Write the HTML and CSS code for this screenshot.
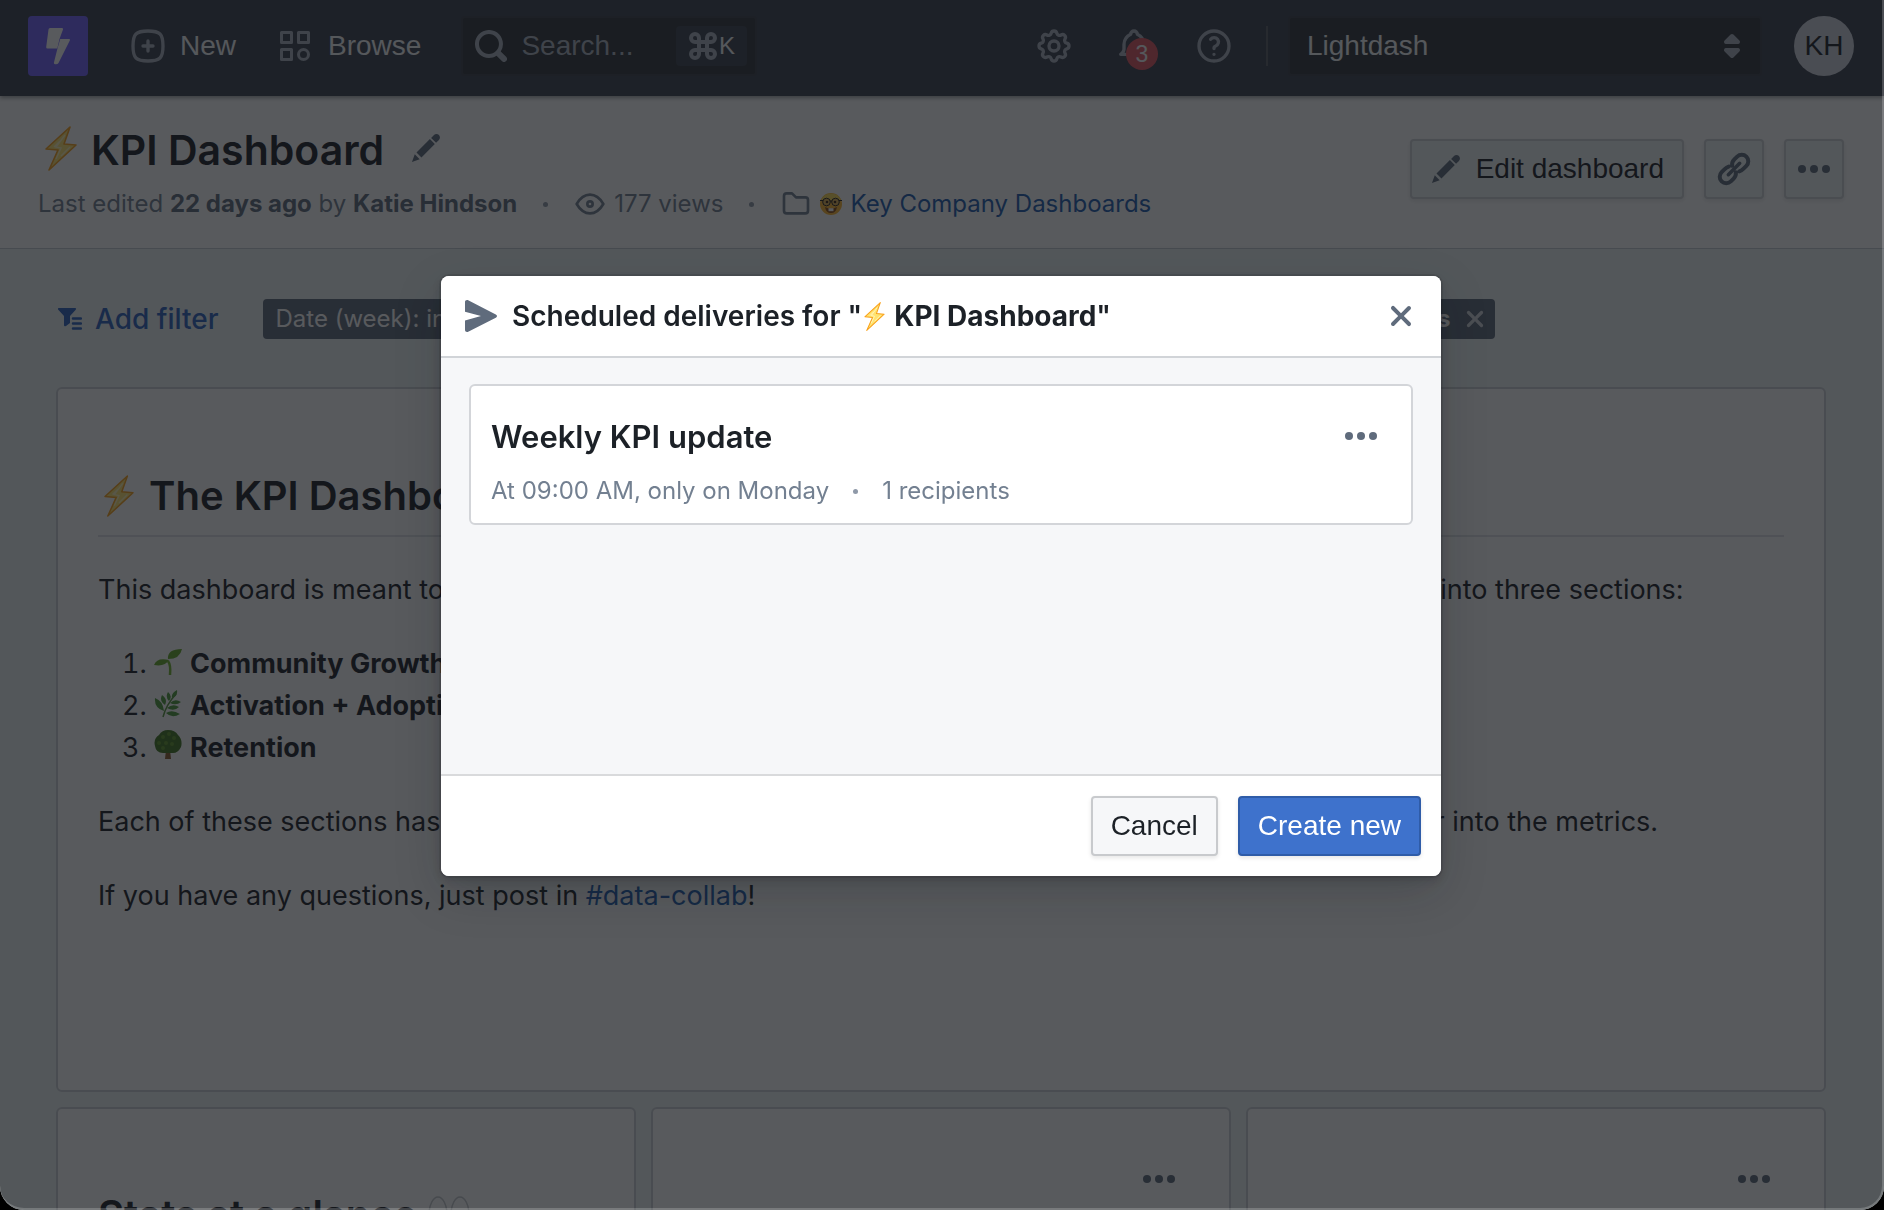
FILE: index.html
```html
<!DOCTYPE html>
<html lang="en">
<head>
<meta charset="utf-8">
<meta name="viewport" content="width=device-width, initial-scale=1">
<title>KPI Dashboard - Lightdash</title>
<link rel="stylesheet" href="styles.css">
</head>
<body>
<svg class="sprite" aria-hidden="true">
  <symbol id="bolt" viewBox="-1 -1 32 45"><path d="M24 0 18 17 30 18 3 43 12 23 0 22Z" fill="#ffe36e" stroke="#f9a11b" stroke-width="1.600" stroke-linejoin="round"/><path d="M19 8 10 20 15 21 10 32M14 14 8 20M24 20 15 29" fill="none" stroke="#fff3b8" stroke-width="1.500"/></symbol>
  <symbol id="edit" viewBox="0 0 16 16"><path fill="currentColor" d="M3.25 10.26l2.47 2.47 6.69-6.69-2.46-2.48-6.7 6.7zM.99 14.99l3.86-1.39-2.46-2.44L.99 15zm12.25-14c-.48 0-.92.2-1.24.51l-1.44 1.44 2.47 2.47 1.44-1.44c.32-.32.51-.75.51-1.24.01-.95-.77-1.74-1.74-1.74z"/></symbol>
  <symbol id="more" viewBox="0 0 16 16"><g fill="currentColor"><circle cx="2" cy="8" r="2"/><circle cx="8" cy="8" r="2"/><circle cx="14" cy="8" r="2"/></g></symbol>
  <symbol id="cross" viewBox="0 0 16 16"><path fill="currentColor" d="M9.41 8l3.29-3.29c.19-.18.3-.43.3-.71a1.003 1.003 0 00-1.71-.71L8 6.59l-3.29-3.3a1.003 1.003 0 00-1.42 1.42L6.59 8 3.3 11.29c-.19.18-.3.43-.3.71a1.003 1.003 0 001.71.71L8 9.41l3.29 3.3a1.003 1.003 0 001.42-1.42L9.41 8z"/></symbol>
</svg>

<div class="app">
  <header class="navbar">
    <a class="logo" href="#" aria-label="Home">
      <svg width="24" height="38" viewBox="0 0 24 38" fill="#fff"><path d="M4 1h12q1.500 0 1 1.500L13.500 12 11.300 21.500H1.500Q0 21.500.2 20L2.500 2.500Q2.700 1 4 1Z"/><path d="M14.200 12H23q1.500 0 .8 1.500L12.500 36q-1 1.500-3 1.300-2-.2-1.500-2L11.200 22.500Z"/></svg>
    </a>
    <button class="nav-button nav-new" type="button">
      <svg class="line-icon" width="40" height="40" viewBox="0 0 24 24"><path d="M9 12h6M12 9v6M12 3c7.200 0 9 1.800 9 9s-1.800 9-9 9-9-1.800-9-9 1.800-9 9-9z"/></svg>
      New
    </button>
    <button class="nav-button nav-browse" type="button">
      <svg width="30" height="30" viewBox="0 0 30 30" fill="none" stroke="currentColor" stroke-width="3" stroke-linejoin="round"><path d="M1.500 1.500h10v10h-10zM18.500 1.500h10v10h-10zM1.500 18.500h10v10h-10z"/><circle cx="23.500" cy="23.500" r="5"/></svg>
      Browse
    </button>
    <label class="search">
      <svg width="32" height="32" viewBox="0 0 16 16" fill="currentColor"><path d="M15.550 13.430l-2.670-2.680a6.940 6.940 0 001.110-3.760c0-3.870-3.130-7-7-7s-7 3.130-7 7 3.130 7 7 7c1.390 0 2.680-.42 3.760-1.110l2.680 2.670a1.498 1.498 0 102.120-2.120zm-8.560-1.440c-2.760 0-5-2.240-5-5s2.240-5 5-5 5 2.240 5 5-2.240 5-5 5z"/></svg>
      <input type="search" placeholder="Search..." aria-label="Search">
      <span class="shortcut"><svg width="28" height="28" viewBox="0 0 28 28" fill="none" stroke="currentColor" stroke-width="4"><path d="M10 10H6a4 4 0 1 1 4-4v16a4 4 0 1 1-4-4h16a4 4 0 1 1-4 4V6a4 4 0 1 1 4 4H10"/></svg><kbd>K</kbd></span>
    </label>
    <div class="nav-right">
      <button class="icon-button" type="button" aria-label="Settings"><svg class="line-icon" width="40" height="40" viewBox="0 0 24 24"><path d="M10.325 4.317c.426-1.756 2.924-1.756 3.350 0a1.724 1.724 0 0 0 2.573 1.066c1.543-.94 3.310.826 2.370 2.370a1.724 1.724 0 0 0 1.065 2.572c1.756.426 1.756 2.924 0 3.350a1.724 1.724 0 0 0-1.066 2.573c.94 1.543-.826 3.310-2.370 2.370a1.724 1.724 0 0 0-2.572 1.065c-.426 1.756-2.924 1.756-3.350 0a1.724 1.724 0 0 0-2.573-1.066c-1.543.94-3.310-.826-2.370-2.370a1.724 1.724 0 0 0-1.065-2.572c-1.756-.426-1.756-2.924 0-3.350a1.724 1.724 0 0 0 1.066-2.573c-.94-1.543.826-3.310 2.370-2.370 1 .608 2.296.07 2.572-1.065z"/><circle cx="12" cy="12" r="3"/></svg></button>
      <button class="icon-button" type="button" aria-label="Notifications"><svg class="line-icon" width="40" height="40" viewBox="0 0 24 24"><path d="M10 5a2 2 0 0 1 4 0a7 7 0 0 1 4 6v3a4 4 0 0 0 2 3h-16a4 4 0 0 0 2-3v-3a7 7 0 0 1 4-6"/></svg><span class="badge">3</span></button>
      <button class="icon-button" type="button" aria-label="Help"><svg class="line-icon" width="40" height="40" viewBox="0 0 24 24"><circle cx="12" cy="12" r="9"/><path d="M12 17v.01M12 13.500a1.500 1.500 0 0 1 1-1.500a2.600 2.600 0 1 0-3-4"/></svg></button>
      <span class="nav-divider"></span>
      <div class="project">
        <select aria-label="Project"><option>Lightdash</option></select>
        <svg width="32" height="32" viewBox="0 0 16 16" fill="currentColor"><path d="M5 7h6a1.003 1.003 0 00.71-1.710l-3-3C8.530 2.110 8.280 2 8 2s-.53.11-.71.29l-3 3A1.003 1.003 0 005 7zm6 2H5a1.003 1.003 0 00-.71 1.710l3 3c.18.18.43.29.71.29s.53-.11.71-.29l3-3A1.003 1.003 0 0011 9z"/></svg>
      </div>
      <button class="avatar" type="button">KH</button>
    </div>
  </header>

  <section class="page-header">
    <div class="page-info">
      <div class="title-row">
        <svg class="bolt-large" width="32" height="45"><use href="#bolt"/></svg>
        <h1>KPI Dashboard</h1>
        <button class="icon-button rename" type="button" aria-label="Rename"><svg width="32" height="32"><use href="#edit"/></svg></button>
      </div>
      <div class="meta">
        <span>Last edited <b>22 days ago</b> by <b>Katie Hindson</b></span>
        <i class="dot"></i>
        <span class="meta-item"><svg class="line-icon" width="32" height="32" viewBox="0 0 24 24"><circle cx="12" cy="12" r="2"/><path d="M22 12c-2.600 4.500-6 7-10 7s-7.400-2.500-10-7c2.600-4.500 6-7 10-7s7.400 2.500 10 7"/></svg>177 views</span>
        <i class="dot"></i>
        <span class="meta-item"><svg class="line-icon" width="32" height="32" viewBox="0 0 24 24"><path d="M5 4h4l3 3h7a2 2 0 0 1 2 2v8a2 2 0 0 1-2 2h-14a2 2 0 0 1-2-2v-11a2 2 0 0 1 2-2"/></svg>
          <svg width="22" height="22" viewBox="0 0 22 22"><circle cx="11" cy="11" r="11" fill="#ffb52e"/><path d="M1 7a11 11 0 0 1 20 0z" fill="#ffdc55"/><path d="M5 14q6 3 12 0-1 6-6 6t-6-6z" fill="#8a4a12"/><path d="M8.500 15.200h5v3h-5z" fill="#fff"/><g fill="#e0b050" stroke="#2b2620" stroke-width="1"><circle cx="6.500" cy="9" r="3.800"/><circle cx="15.500" cy="9" r="3.800"/></g><path d="M0 7.500h3M10 8h2M19 7.500h3" stroke="#2b2620" stroke-width="1.200"/><circle cx="7" cy="9" r="1.300" fill="#3c2410"/><circle cx="15" cy="9" r="1.300" fill="#3c2410"/></svg>
          <a href="#">Key Company Dashboards</a></span>
      </div>
    </div>
    <div class="page-actions">
      <button class="button" type="button"><svg width="32" height="32"><use href="#edit"/></svg>Edit dashboard</button>
      <button class="button square" type="button" aria-label="Copy link"><svg width="36" height="36" viewBox="-18 -18 36 36" fill="none" stroke="currentColor" stroke-linecap="round"><g transform="rotate(-45)"><path stroke-width="4" d="M-2 -5.500Q-4 -6.500-7 -6.500H-11a6 6 0 0 0 0 13h4q4 0 6-3M2 5.500Q4 6.500 7 6.500H11a6 6 0 0 0 0-13h-4q-4 0-6 3"/><path stroke-width="3.600" d="M-8 0H8"/></g></svg></button>
      <button class="button square" type="button" aria-label="More actions"><svg width="32" height="32"><use href="#more"/></svg></button>
    </div>
  </section>

  <main class="content">
    <div class="filters">
      <button class="add-filter" type="button"><svg width="24" height="22" viewBox="0 0 24 22" fill="currentColor"><path d="M1 0h16q2 0 .5 2L12 8v7l-4 3q-2 1-2-1V8L.500 2Q-1 0 1 0Z"/><path d="M15 10.500h8M15 15.500h8M15 20.500h8" stroke="currentColor" stroke-width="2.500" stroke-linecap="round"/></svg>Add filter</button>
      <div class="filter-tags">
        <span class="tag">Date (week): in the last 12 completed weeks</span>
        <span class="tag tag-last"><b>weeks</b><button type="button" aria-label="Remove filter"><svg width="26" height="26"><use href="#cross"/></svg></button></span>
      </div>
    </div>

    <article class="tile tile-text">
      <h2><svg width="30" height="42"><use href="#bolt"/></svg>The KPI Dashboard</h2>
      <p>This dashboard is meant to share an overview of how we are doing as a company. The charts are all split into three sections:</p>
      <ol>
        <li><svg width="28" height="28" viewBox="0 0 28 28"><path d="M16 27Q17 17 14 13" fill="none" stroke="#74b62e" stroke-width="2.500"/><path d="M0 17Q3 9 15 12 11 19 0 17ZM14 11Q13 1 28 1 26 11 14 11Z" fill="#67aa27"/></svg><b>Community Growth</b></li>
        <li><svg width="28" height="28" viewBox="0 0 28 28"><path d="M9 27Q12 15 22 4" fill="none" stroke="#57943c" stroke-width="1.500"/><g fill="#4e9a3b"><path d="M1 8Q9 11 10 21 0 18 1 8ZM12 23Q18 19 26 24 18 29 12 23ZM13 18Q19 13 25 17 20 22 13 18ZM16 13Q21 8 27 12 22 16 16 13ZM11 15Q5 11 8 5 14 9 11 15ZM15 11Q11 7 14 2 19 6 15 11ZM18 8Q17 3 23 0 24 6 18 8Z"/></g></svg><b>Activation + Adoption</b></li>
        <li><svg width="28" height="30" viewBox="0 0 28 30"><path d="M12 20h4l1 9h-6z" fill="#8a5a2c"/><path d="M14 0q7 0 10 5 5 5 3 12-3 6-8 6H9q-7 0-8-7-2-7 4-11 3-5 9-5z" fill="#42751f"/><g fill="#5f9628"><circle cx="9" cy="7" r="2"/><circle cx="15" cy="4" r="2"/><circle cx="20" cy="8" r="2"/><circle cx="5" cy="13" r="2"/><circle cx="12" cy="13" r="2"/><circle cx="18" cy="14" r="2"/><circle cx="9" cy="18" r="2"/></g></svg><b>Retention</b></li>
      </ol>
      <p>Each of these sections has its own dashboard that you can view whenever you would like to dig in deeper into the metrics.</p>
      <p>If you have any questions, just post in <a href="#">#data-collab</a>!</p>
    </article>

    <div class="tile-row">
      <article class="tile tile-stat"><h2>Stats at a glance <svg width="44" height="40" viewBox="0 0 44 40" fill="#fff" stroke="#c5c8cc" stroke-width="1.500"><ellipse cx="11" cy="20" rx="9" ry="18"/><ellipse cx="33" cy="20" rx="9" ry="18"/></svg></h2></article>
      <article class="tile tile-chart"><button class="icon-button" type="button" aria-label="Tile options"><svg width="32" height="32"><use href="#more"/></svg></button></article>
      <article class="tile tile-chart"><button class="icon-button" type="button" aria-label="Tile options"><svg width="32" height="32"><use href="#more"/></svg></button></article>
    </div>
  </main>
</div>

<div class="backdrop">
  <div class="dialog" role="dialog" aria-modal="true" aria-labelledby="dialog-title">
    <header class="dialog-header">
      <svg width="32" height="32" viewBox="0 0 16 16" fill="currentColor"><path d="M0 1C0 .1.900-.2 1.600.150L15.400 7.200c.8.450.8 1.200 0 1.650L1.600 15.850C.900 16.200 0 15.900 0 15V10.200L8 8 0 5.900Z"/></svg>
      <h2 id="dialog-title">Scheduled deliveries for "<svg width="21" height="29"><use href="#bolt"/></svg> <b>KPI Dashboard</b>"</h2>
      <button class="icon-button" type="button" aria-label="Close"><svg width="32" height="32"><use href="#cross"/></svg></button>
    </header>
    <div class="dialog-body">
      <div class="delivery">
        <div>
          <h3>Weekly KPI update</h3>
          <p class="delivery-meta"><span>At 09:00 AM, only on Monday</span><i class="dot"></i><span>1 recipients</span></p>
        </div>
        <button class="icon-button" type="button" aria-label="Delivery options"><svg width="32" height="32"><use href="#more"/></svg></button>
      </div>
    </div>
    <footer class="dialog-footer">
      <button class="button" type="button">Cancel</button>
      <button class="button primary" type="button">Create new</button>
    </footer>
  </div>
</div>
</body>
</html>
```
FILE: styles.css
```css
* { box-sizing: border-box; }

body {
  margin: 0;
  height: 100vh;
  overflow: hidden;
  background: #000;
  color: #1c2127;
  font-family: Inter, "Noto Sans", sans-serif;
  font-size: 27px;
  line-height: 42px;
}

h1, h2, h3, p, ol { margin: 0; }
h1, h2, h3 { font-weight: 600; }
b { font-weight: 700; }
svg { display: block; flex: none; }
a { color: #215db0; text-decoration: none; }

button, input, select {
  margin: 0;
  padding: 0;
  border: 0;
  background: none;
  color: inherit;
  font: 28px/36px "Liberation Sans", Arial, sans-serif;
}

.sprite { position: absolute; width: 0; height: 0; }

.line-icon {
  fill: none;
  stroke: currentColor;
  stroke-width: 2;
  stroke-linecap: round;
  stroke-linejoin: round;
}

.icon-button { position: relative; color: #5f6b7c; }

.dot {
  width: 5px;
  height: 5px;
  border-radius: 50%;
  background: #8f99a8;
}

.app {
  height: 100vh;
  overflow: hidden;
  border-radius: 0 0 24px 24px;
  background: #eff6f6;
}

/* Navigation bar */
.navbar {
  position: relative;
  display: flex;
  align-items: center;
  height: 96px;
  padding: 0 30px 4px 28px;
  background: #3b404e;
  color: #abb3bf;
  box-shadow: 0 2px 4px rgba(17, 20, 24, 0.4);
}

.logo {
  display: grid;
  place-items: center;
  width: 60px;
  height: 60px;
  border-radius: 4px;
  background: #7262ff;
}

.nav-button { display: flex; align-items: center; color: #f6f7f9; }
.nav-button svg { color: #abb3bf; }
.nav-new { gap: 12px; margin-left: 40px; }
.nav-browse { gap: 18px; margin-left: 44px; }

.search {
  display: flex;
  align-items: center;
  width: 296px;
  height: 60px;
  margin-left: 40px;
  padding: 0 8px 0 12px;
  border: 2px solid #3b3f47;
  border-radius: 4px;
  background: #30343a;
}
.search input { flex: 1; min-width: 0; margin-left: 14px; outline: 0; }
.search input::placeholder { color: #abb3bf; opacity: 1; }

.shortcut {
  display: flex;
  align-items: center;
  justify-content: center;
  gap: 2px;
  width: 71px;
  height: 40px;
  border-radius: 4px;
  background: #3b404e;
}
.shortcut kbd { color: #f6f7f9; font: 24px/40px "Liberation Sans", Arial, sans-serif; }

.nav-right {
  display: flex;
  flex: 1;
  align-items: center;
  justify-content: flex-end;
  gap: 40px;
}
.nav-right .icon-button { color: #abb3bf; }

.badge {
  position: absolute;
  top: 12px;
  left: 12px;
  width: 32px;
  height: 32px;
  border-radius: 50%;
  background: #e2555f;
  color: #f6f7f9;
  font-size: 23px;
  line-height: 32px;
}

.nav-divider { width: 2px; height: 40px; margin-left: -8px; background: #5b5f66; }

.project {
  display: flex;
  align-items: center;
  width: 474px;
  margin: 0 -8px 0 -20px;
  border: 2px solid #3b3f47;
  border-radius: 4px;
  background: #30343a;
}
.project select {
  width: 100%;
  height: 56px;
  padding-left: 17px;
  appearance: none;
  color: #f6f7f9;
}
.project svg { margin: 0 12px 0 -44px; pointer-events: none; }

.avatar {
  width: 60px;
  height: 60px;
  border-radius: 50%;
  background: #d0d4de;
  color: #1c2127;
}

/* Page header */
.page-header {
  display: flex;
  align-items: flex-start;
  justify-content: space-between;
  height: 153px;
  padding: 28px 40px 0 38px;
  border-bottom: 1px solid #c5cbd3;
  background: #fff;
}

.title-row { display: flex; align-items: center; }
.title-row h1 { margin-left: 14px; font-size: 41px; line-height: 52px; }
.bolt-large { margin: -4px 0 0 7px; }
.rename { margin: -4px 0 0 26px; }

.meta {
  display: flex;
  align-items: center;
  gap: 26px;
  margin-top: 11px;
  color: #738091;
  font-size: 24px;
  line-height: 34px;
}
.meta b { color: #5f6b7c; }
.meta-item { display: flex; align-items: center; gap: 8px; }

.page-actions { display: flex; gap: 20px; padding-top: 15px; }

.button {
  display: flex;
  align-items: center;
  justify-content: center;
  gap: 14px;
  height: 60px;
  padding: 0 18px;
  border: 2px solid #c8cacd;
  border-radius: 4px;
  background: #f6f7f9;
  box-shadow: 0 2px 4px rgba(17, 20, 24, 0.1);
}
.button svg { color: #5f6b7c; }
.page-actions .button { border-color: #cfd2d5; background: #eff6f6; }
.square { width: 60px; padding: 0; }

/* Dashboard */
.content { padding: 50px 58px 0 56px; }

.filters { display: flex; align-items: center; gap: 45px; }
.add-filter {
  display: flex;
  align-items: center;
  gap: 13px;
  margin-left: 2px;
  color: #2d62bf;
  font: 500 28px/40px Inter, sans-serif;
}
.filter-tags { display: flex; width: 1232px; }
.tag {
  display: flex;
  flex: 1;
  align-items: center;
  height: 40px;
  padding: 0 7px 0 12px;
  border-radius: 4px;
  background: #5f6b7c;
  color: #fff;
  font-size: 24px;
}
.tag-last { justify-content: flex-end; gap: 12px; }
.tag button { color: #d3d8de; }

.tile {
  border: 2px solid #cdd1d5;
  border-radius: 6px;
  background: #fff;
}

.tile-text { height: 705px; margin-top: 48px; padding: 78px 40px 0; }
.tile-text h2 {
  display: flex;
  align-items: center;
  gap: 15px;
  height: 70px;
  padding: 0 0 10px 6px;
  border-bottom: 2px solid #dfe2e6;
  font-size: 40px;
}
.tile-text p, .tile-text ol { margin-top: 32px; }
.tile-text ol { padding-left: 56px; }
.tile-text li svg { display: inline-block; margin-right: 8px; vertical-align: -3px; }

.tile-row {
  display: grid;
  grid-template-columns: repeat(3, 1fr);
  gap: 15px;
  margin-top: 15px;
}
.tile-row .tile { height: 400px; padding: 54px 54px 0 40px; }
.tile-row .tile-stat { padding-top: 80px; }
.tile-stat h2 { display: flex; gap: 10px; font-size: 40px; line-height: 52px; }
.tile-stat svg { margin-top: 6px; }
.tile-chart { display: flex; align-items: flex-start; justify-content: flex-end; }

/* Dialog */
.backdrop {
  position: fixed;
  inset: 0;
  display: flex;
  align-items: flex-start;
  justify-content: center;
  padding-top: 276px;
  border: solid rgba(255, 255, 255, 0.2);
  border-width: 0 2px 2px 0;
  border-radius: 0 0 24px 24px;
  background: rgba(17, 20, 24, 0.7);
}

.dialog {
  display: flex;
  flex-direction: column;
  width: 1000px;
  min-height: 600px;
  overflow: hidden;
  border-radius: 8px;
  background: #f6f7f9;
  box-shadow: 0 0 0 2px rgba(17, 20, 24, 0.1), 0 4px 8px rgba(17, 20, 24, 0.2), 0 16px 48px rgba(17, 20, 24, 0.2);
}

.dialog-header {
  display: flex;
  align-items: center;
  gap: 15px;
  height: 82px;
  padding: 0 24px;
  border-bottom: 2px solid #d1d4d8;
  background: #fff;
  color: #5f6b7c;
}
.dialog-header h2 { flex: 1; color: #1c2127; font-size: 28px; }
.dialog-header h2 svg { display: inline-block; margin: 0 2px; vertical-align: -5px; }

.dialog-body { flex: 1; padding: 26px 28px; }

.delivery {
  display: flex;
  align-items: flex-start;
  justify-content: space-between;
  padding: 30px 34px 11px 20px;
  border: 2px solid #d3d5d9;
  border-radius: 6px;
  background: #fff;
}
.delivery h3 { font-size: 31px; line-height: 42px; }
.delivery .icon-button { padding-top: 4px; }
.delivery-meta {
  display: flex;
  align-items: center;
  gap: 24px;
  margin-top: 12px;
  color: #738091;
  font-size: 24px;
}

.dialog-footer {
  display: flex;
  justify-content: flex-end;
  gap: 20px;
  padding: 20px;
  border-top: 2px solid #d9dadc;
  background: #fff;
}

.primary { border-color: #2f5ca8; background: #3e72cc; color: #fff; }
```
